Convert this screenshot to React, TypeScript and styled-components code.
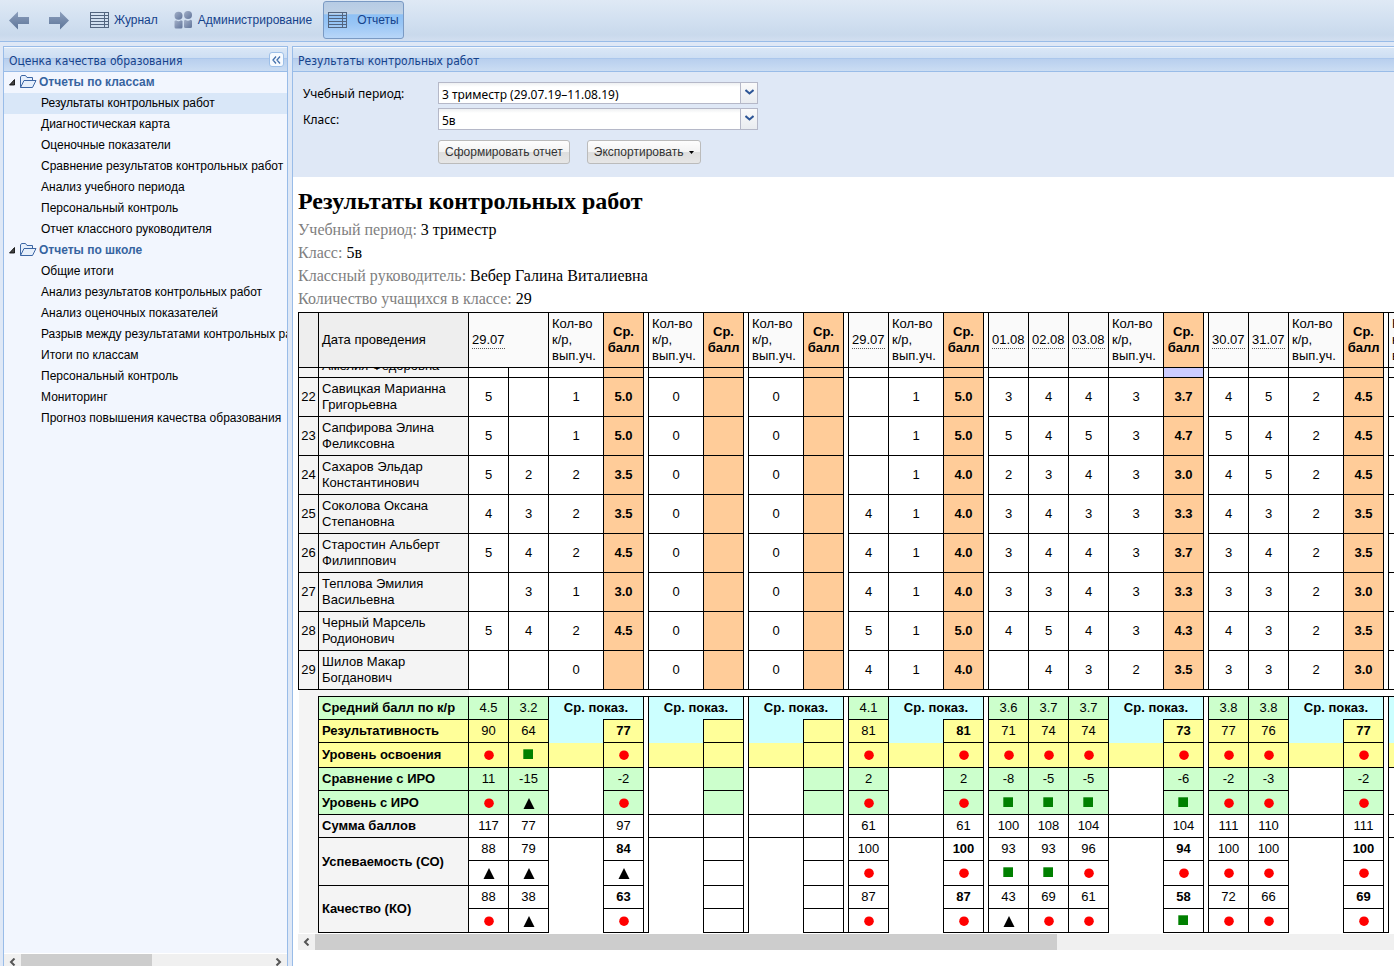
import React from "react";
import styled, { createGlobalStyle, css } from "styled-components";

const GlobalStyle = createGlobalStyle`
  * { box-sizing: border-box; }
  html, body, #root { height: 100%; }
  body {
    margin: 0;
    overflow: hidden;
    background: #dfe8f6;
    font-family: "Liberation Sans", Arial, sans-serif;
    font-size: 12px;
    color: #000;
  }
`;

const tahoma = css`
  font-family: Tahoma, "DejaVu Sans Condensed", "DejaVu Sans", sans-serif;
  font-stretch: condensed;
`;

const formFont = css`
  font-family: Tahoma, "Noto Sans", "DejaVu Sans", sans-serif;
`;

/* ---------- page frame ---------- */

const Page = styled.div`
  height: 100%;
  display: flex;
  flex-direction: column;
`;

const Toolbar = styled.nav`
  flex: none;
  height: 42px;
  display: flex;
  align-items: flex-start;
  gap: 6px;
  padding: 1px 4px;
  border-bottom: 1px solid #99bce8;
  background: linear-gradient(#dfe9f5, #d3e1f1 45%, #c9d9ec 85%, #d2dff0);
`;

const History = styled.div`
  display: flex;
  width: 75px;
`;

const ToolButton = styled.button<{ $active?: boolean; $gap: number }>`
  height: 38px;
  display: flex;
  align-items: center;
  gap: ${(p) => p.$gap}px;
  padding: 0 4px;
  border: 1px solid transparent;
  border-radius: 3px;
  background: none;
  font: 12px/16px "Liberation Sans", Arial, sans-serif;
  color: #15428b;
  ${(p) =>
    p.$active &&
    css`
      border-color: #7a9ac4;
      background: linear-gradient(#b6cbe4, #bfd2e6 34%, #8dc0f5 35%, #98c5f5 60%, #b8d6f8);
    `}
`;

const ArrowButton = styled(ToolButton)`
  flex: none;
  width: 40px;
`;

const Columns = styled.div`
  flex: 1;
  min-height: 0;
  display: flex;
  gap: 4px;
  padding: 4px 0 0 3px;
`;

const Sidebar = styled.aside`
  flex: none;
  width: 285px;
  display: flex;
  flex-direction: column;
  border: 1px solid #99bce8;
  border-bottom: 0;
  background: #f2f6fe;
`;

const Main = styled.main`
  flex: 1;
  min-width: 0;
  display: flex;
  flex-direction: column;
  border: 1px solid #99bce8;
  border-width: 1px 0 0 1px;
  background: #fff;
`;

const PanelHeader = styled.header`
  flex: none;
  height: 25px;
  display: flex;
  align-items: center;
  justify-content: space-between;
  padding: 3px 3px 0 5px;
  border-bottom: 1px solid #99bce8;
  background: linear-gradient(#f4f8fd 0 1px, #dae7f6 1px, #cddef3 11px, #abc7ec 11px 12px, #b8cfee 12px, #cbddf3);
`;

const PanelTitle = styled.h2`
  ${tahoma}
  margin: 0;
  font-size: 12px;
  line-height: 16px;
  font-weight: normal;
  color: #15428b;
`;

const CollapseButton = styled.button`
  width: 15px;
  height: 15px;
  display: flex;
  align-items: center;
  justify-content: center;
  margin-bottom: 2px;
  padding: 0;
  border: 1px solid #9dbfe8;
  border-radius: 3px;
  background: #f6faff;
`;

/* ---------- report tree ---------- */

const Tree = styled.ul`
  flex: 1;
  min-height: 0;
  margin: 0;
  padding: 0;
  list-style: none;
  overflow: hidden;
`;

const Branch = styled.ul`
  margin: 0;
  padding: 0;
  list-style: none;
`;

const Folder = styled.button`
  width: 100%;
  height: 21px;
  display: flex;
  align-items: center;
  gap: 2px;
  padding: 0 0 1px 5px;
  border: 0;
  background: none;
  font: bold 12px/16px "Liberation Sans", Arial, sans-serif;
  color: #3764a0;
`;

const Leaf = styled.a<{ $selected?: boolean }>`
  display: block;
  height: 21px;
  padding-left: 37px;
  line-height: 20px;
  white-space: nowrap;
  overflow: hidden;
  color: #000;
  text-decoration: none;
  background: ${(p) => (p.$selected ? "#d9e7f8" : "none")};
`;

/* ---------- scroll bars ---------- */

const ScrollBar = styled.div`
  flex: none;
  display: flex;
  height: 16px;
  background: #f0f0f0;
`;

const TreeScrollBar = styled(ScrollBar)`
  height: 13px;
  border-top: 1px solid #fff;
`;

const ScrollArrow = styled.button`
  flex: none;
  width: 17px;
  height: 15px;
  display: flex;
  align-items: center;
  justify-content: center;
  padding: 0;
  border: 0;
  background: none;
`;

const ScrollThumb = styled.div<{ $share: number }>`
  flex: ${(p) => p.$share};
  background: #cdcdcd;
`;

const ScrollRest = styled.div<{ $share: number }>`
  flex: ${(p) => p.$share};
`;

/* ---------- filter form ---------- */

const Filters = styled.form`
  ${formFont}
  flex: none;
  display: grid;
  grid-template-columns: 135px 320px;
  grid-template-rows: 22px 22px 30px;
  row-gap: 4px;
  padding: 10px 10px 13px;
  background: #dfe8f6;
`;

const FieldLabel = styled.label`
  font-size: 12px;
  line-height: 24px;
`;

const SelectBox = styled.div`
  position: relative;
  display: flex;
`;

const Select = styled.select`
  ${formFont}
  flex: 1;
  appearance: none;
  padding: 2px 20px 0 3px;
  border: 1px solid #b5b8c8;
  border-radius: 0;
  background: linear-gradient(#eef0f2, #fff 4px);
  font-size: 12px;
  color: #000;
`;

const Trigger = styled.span`
  position: absolute;
  top: 1px;
  right: 1px;
  bottom: 1px;
  width: 17px;
  display: flex;
  align-items: center;
  justify-content: center;
  padding-bottom: 2px;
  border-left: 1px solid #b5b8c8;
  background: linear-gradient(#fafafa, #e9ecf0);
  pointer-events: none;
`;

const FormButtons = styled.div`
  grid-column: 2;
  display: flex;
  gap: 17px;
  padding-top: 6px;
`;

const FormButton = styled.button`
  display: flex;
  align-items: center;
  gap: 6px;
  height: 24px;
  padding: 0 6px;
  border: 1px solid #bbb;
  border-radius: 3px;
  background: linear-gradient(#fdfdfd, #f3f3f3 50%, #dedede 51%, #e6e6e6);
  font: 12px/16px "Liberation Sans", Arial, sans-serif;
  color: #333;
  white-space: nowrap;
`;

/* ---------- report ---------- */

const Report = styled.section`
  flex: 1;
  min-height: 0;
  padding: 10px 0 0 5px;
  overflow: hidden;
`;

const ReportTitle = styled.h1`
  margin: 0;
  font: bold 24px/28px "Liberation Serif", "Times New Roman", serif;
`;

const Facts = styled.dl`
  margin: 3px 0 2px;
  font: 16px/23px "Liberation Serif", "Times New Roman", serif;
`;

const Fact = styled.div`
  display: flex;
  gap: 4px;
  dt { color: #808080; }
  dd { margin: 0; }
`;

const Grid = styled.table<{ $width: number }>`
  width: ${(p) => p.$width}px;
  table-layout: fixed;
  border-collapse: collapse;
  font-size: 13px;
  line-height: 16px;
`;

const Viewport = styled.div`
  overflow: hidden;
`;

const ScrolledGrid = styled(Grid)`
  margin-top: -30px;
`;

const Row = styled.tr<{ $h: number }>`
  height: ${(p) => p.$h}px;
`;

const cell = css`
  padding: 0 3px;
  border: 1px solid #000;
  font-weight: normal;
`;

const HeadCell = styled.th<{ $bg?: string }>`
  ${cell}
  text-align: left;
  background: ${(p) => p.$bg || "#fafafa"};
`;

const AverageHead = styled(HeadCell)`
  padding: 0;
  text-align: center;
  font-weight: bold;
  background: #ffcc99;
`;

const DateLink = styled.a`
  display: inline-block;
  border-bottom: 1px dotted #555;
  color: #000;
  text-decoration: none;
  white-space: nowrap;
`;

const NameCell = styled.th`
  ${cell}
  text-align: left;
  background: #f4f4f4;
`;

const NumberCell = styled(NameCell)`
  padding: 0;
  text-align: center;
`;

const LastLine = styled(NameCell)`
  padding-bottom: 3px;
  vertical-align: bottom;
`;

const ValueCell = styled.td<{ $bg?: string; $bold?: boolean }>`
  ${cell}
  padding: 0;
  text-align: center;
  font-weight: ${(p) => (p.$bold ? "bold" : "normal")};
  background: ${(p) => p.$bg || "#fff"};
`;

const GapCell = styled.td<{ $top?: boolean; $bottom?: boolean }>`
  padding: 0;
  border: 0 solid #000;
  border-left-width: 1px;
  border-right-width: 1px;
  ${(p) => p.$top && "border-top-width: 1px;"}
  ${(p) => p.$bottom && "border-bottom-width: 1px;"}
`;

const OpenCell = styled.td<{ $bg?: string; $bottom?: boolean }>`
  padding: 0;
  border: 0 solid #000;
  ${(p) => p.$bottom && "border-bottom-width: 1px;"}
  background: ${(p) => p.$bg || "#fff"};
`;

const SummaryTitle = styled.td`
  padding: 0;
  border: 0 solid #000;
  border-top-width: 1px;
  text-align: center;
  font-weight: bold;
  background: #ccffff;
`;

const MarginCell = styled.td`
  padding: 0;
  background: #f4f4f4;
`;

const SummaryLabel = styled(NameCell)<{ $bg?: string }>`
  font-weight: bold;
  background: ${(p) => p.$bg || "#f4f4f4"};
`;

const TableScrollBar = styled(ScrollBar)`
  margin-top: 1px;
`;

/* ---------- drawings ---------- */

const MarkSvg = styled.svg`
  display: block;
  margin: 0 auto;
`;

function Mark({ kind }: { kind: string }) {
  return (
    <MarkSvg width="14" height="14" viewBox="0 0 14 14">
      {kind === "c" && <circle cx="7" cy="7.2" r="4.8" fill="#f00" />}
      {kind === "s" && <rect x="1.300" y="1.300" width="9.700" height="9.700" fill="#008000" />}
      {kind === "t" && <path d="M7 2 L12.500 13 H1.500 Z" fill="#000" />}
    </MarkSvg>
  );
}

function Arrow({ right }: { right?: boolean }) {
  return (
    <svg width="20" height="19" viewBox="0 0 20 19">
      <defs>
        <linearGradient id="arrowFill" x1="0" y1="0" x2="0" y2="1">
          <stop offset="0" stopColor="#8d9fbd" />
          <stop offset="1" stopColor="#5d7598" />
        </linearGradient>
      </defs>
      <path
        d={right ? "M20 9.5 L11 0.5 V6 H0 V13 H11 V18.5 Z" : "M0 9.5 L9 0.5 V6 H20 V13 H9 V18.5 Z"}
        fill="url(#arrowFill)"
      />
    </svg>
  );
}

function SheetIcon() {
  return (
    <svg width="19" height="16" viewBox="0 0 19 16" fill="none" stroke="#53657f">
      <rect x="0.5" y="0.5" width="18" height="15" />
      <path d="M0 3.5H19 M0 6.5H19 M0 9.5H19 M0 12.5H19 M14.5 0V16" />
    </svg>
  );
}

function PeopleIcon() {
  return (
    <svg width="19" height="18" viewBox="0 0 19 18">
      <defs>
        <linearGradient id="peopleFill" x1="0" y1="0" x2="1" y2="1">
          <stop offset="0" stopColor="#a3b0c8" />
          <stop offset="1" stopColor="#60749a" />
        </linearGradient>
      </defs>
      <g fill="url(#peopleFill)">
        <circle cx="4.5" cy="4.7" r="4" />
        <circle cx="14" cy="4" r="4" />
        <path d="M0.5 10 L2 9.300 Q4.500 11 7 9.300 L8.500 10 V16 Q8.500 17.500 7 17.500 H2 Q0.500 17.500 0.500 16 Z" />
        <path d="M10 9.500 L11.500 8.800 Q14 10.500 16.500 8.800 L18 9.500 V15.500 Q18 17 16.500 17 H11.500 Q10 17 10 15.500 Z" />
      </g>
    </svg>
  );
}

function FolderIcon() {
  return (
    <svg width="17" height="14" viewBox="0 0 17 14" fill="#e6effb" stroke="#3c66a4" strokeLinejoin="round">
      <path d="M0.500 12.500 V2 L1.500 0.500 H5.500 L7 2.500 H12.500 V5.500" />
      <path d="M0.500 12.500 L4 5.500 H16 L12.500 12.500 Z" />
    </svg>
  );
}

function ExpandedIcon() {
  return (
    <svg width="9" height="8" viewBox="0 0 9 8">
      <path d="M5.500 1.500 V7 H0.500 Z" fill="#444" stroke="#000" strokeWidth="0.8" />
    </svg>
  );
}

function Chevron({ right }: { right?: boolean }) {
  return (
    <svg width="7" height="8" viewBox="0 0 7 8" fill="none" stroke="#555" strokeWidth="2">
      <path d={right ? "M1.500 0.500 L5 4 L1.500 7.500" : "M5.500 0.500 L2 4 L5.500 7.500"} />
    </svg>
  );
}

function DropIcon() {
  return (
    <svg width="9" height="6" viewBox="0 0 9 6" fill="none" stroke="#2d5596" strokeWidth="2">
      <path d="M0.500 1 L4.500 4.500 L8.500 1" />
    </svg>
  );
}

/* ---------- data ---------- */

const tree = [
  {
    title: "Отчеты по классам",
    items: [
      "Результаты контрольных работ",
      "Диагностическая карта",
      "Оценочные показатели",
      "Сравнение результатов контрольных работ",
      "Анализ учебного периода",
      "Персональный контроль",
      "Отчет классного руководителя",
    ],
  },
  {
    title: "Отчеты по школе",
    items: [
      "Общие итоги",
      "Анализ результатов контрольных работ",
      "Анализ оценочных показателей",
      "Разрыв между результатами контрольных работ",
      "Итоги по классам",
      "Персональный контроль",
      "Мониторинг",
      "Прогноз повышения качества образования",
    ],
  },
];

type Group = { marks: number; dates: string[] };

const groups: Group[] = [
  { marks: 2, dates: ["29.07"] },
  { marks: 0, dates: [] },
  { marks: 0, dates: [] },
  { marks: 1, dates: ["29.07"] },
  { marks: 3, dates: ["01.08", "02.08", "03.08"] },
  { marks: 2, dates: ["30.07", "31.07"] },
  { marks: 0, dates: [] },
];

const widths = [20, 150];
groups.forEach((g, i) => {
  if (i) widths.push(5);
  for (let m = 0; m < g.marks; m++) widths.push(40);
  widths.push(55, 40);
});
const tableWidth = widths.reduce((a, b) => a + b, 1);

// Each student: marks of a group, then the count and the average, groups split by "|".
const students: [number, string, string, string][] = [
  [22, "Савицкая Марианна", "Григорьевна", "5,,1,5.0|0,|0,|,1,5.0|3,4,4,3,3.7|4,5,2,4.5|,"],
  [23, "Сапфирова Элина", "Феликсовна", "5,,1,5.0|0,|0,|,1,5.0|5,4,5,3,4.7|5,4,2,4.5|,"],
  [24, "Сахаров Эльдар", "Константинович", "5,2,2,3.5|0,|0,|,1,4.0|2,3,4,3,3.0|4,5,2,4.5|,"],
  [25, "Соколова Оксана", "Степановна", "4,3,2,3.5|0,|0,|4,1,4.0|3,4,3,3,3.3|4,3,2,3.5|,"],
  [26, "Старостин Альберт", "Филиппович", "5,4,2,4.5|0,|0,|4,1,4.0|3,4,4,3,3.7|3,4,2,3.5|,"],
  [27, "Теплова Эмилия", "Васильевна", ",3,1,3.0|0,|0,|4,1,4.0|3,3,4,3,3.3|3,3,2,3.0|,"],
  [28, "Черный Марсель", "Родионович", "5,4,2,4.5|0,|0,|5,1,5.0|4,5,4,3,4.3|4,3,2,3.5|,"],
  [29, "Шилов Макар", "Богданович", ",,0,|0,|0,|4,1,4.0|,4,3,2,3.5|3,3,2,3.0|,"],
];

const GREEN = "#ccffcc";
const YELLOW = "#ffff99";
const CYAN = "#ccffff";
const PEACH = "#ffcc99";

type Summary = {
  label?: string;
  span?: number;
  h: number;
  bg?: string;
  labelBg?: string;
  blank: "title" | "open" | "line" | "closed";
  blankBg?: string;
  bold?: boolean;
  values: string;
};

// Values of the date columns followed by the average; c, s and t stand for marks.
const summary: Summary[] = [
  { label: "Средний балл по к/р", h: 23, bg: GREEN, labelBg: GREEN, blank: "title", values: "4.5,3.2|||4.1|3.6,3.7,3.7|3.8,3.8|" },
  { label: "Результативность", h: 23, bg: YELLOW, labelBg: YELLOW, blank: "open", blankBg: CYAN, bold: true, values: "90,64,77|||81,81|71,74,74,73|77,76,77|" },
  { label: "Уровень освоения", h: 25, bg: YELLOW, labelBg: YELLOW, blank: "line", blankBg: YELLOW, values: "c,s,c|||c,c|c,c,c,c|c,c,c|" },
  { label: "Сравнение с ИРО", h: 23, bg: GREEN, labelBg: GREEN, blank: "open", values: "11,-15,-2|||2,2|-8,-5,-5,-6|-2,-3,-2|" },
  { label: "Уровень с ИРО", h: 24, bg: GREEN, labelBg: GREEN, blank: "line", values: "c,t,c|||c,c|s,s,s,s|c,c,c|" },
  { label: "Сумма баллов", h: 23, blank: "closed", values: "117,77,97|||61,61|100,108,104,104|111,110,111|" },
  { label: "Успеваемость (СО)", span: 2, h: 23, blank: "open", bold: true, values: "88,79,84|||100,100|93,93,96,94|100,100,100|" },
  { h: 25, blank: "open", values: "t,t,t|||c,c|s,s,c,c|c,c,c|" },
  { label: "Качество (КО)", span: 2, h: 23, blank: "open", bold: true, values: "88,38,63|||87,87|43,69,61,58|72,66,69|" },
  { h: 24, blank: "open", values: "c,t,c|||c,c|t,c,c,s|c,c,c|" },
];

/* ---------- table parts ---------- */

function Cols() {
  return (
    <colgroup>
      {widths.map((w, i) => (
        <col key={i} width={w} />
      ))}
    </colgroup>
  );
}

function TableHead() {
  return (
    <Grid $width={tableWidth}>
      <Cols />
      <thead>
        <Row $h={55}>
          <HeadCell $bg="#eeeeee" />
          <HeadCell $bg="#eeeeee">Дата проведения</HeadCell>
          {groups.map((g, gi) => (
            <React.Fragment key={gi}>
              {gi > 0 && <GapCell $top $bottom />}
              {g.dates.map((d) => (
                <HeadCell key={d} colSpan={g.marks / g.dates.length}>
                  <DateLink href="#">{d}</DateLink>
                </HeadCell>
              ))}
              <HeadCell>Кол-во к/р, вып.уч.</HeadCell>
              <AverageHead>Ср. балл</AverageHead>
            </React.Fragment>
          ))}
        </Row>
      </thead>
    </Grid>
  );
}

function ClippedRow() {
  return (
    <Row $h={39}>
      <NumberCell />
      <LastLine>Амелия Федоровна</LastLine>
      {groups.map((g, gi) => (
        <React.Fragment key={gi}>
          {gi > 0 && <GapCell />}
          {Array.from({ length: g.marks + 1 }, (_, i) => (
            <ValueCell key={i} />
          ))}
          <ValueCell $bg={gi === 4 ? "#ccccff" : PEACH} />
        </React.Fragment>
      ))}
    </Row>
  );
}

function StudentRow({ row, last }: { row: [number, string, string, string]; last: boolean }) {
  const [num, first, second, data] = row;
  return (
    <Row $h={39}>
      <NumberCell>{num}</NumberCell>
      <NameCell>
        {first}
        <br />
        {second}
      </NameCell>
      {data.split("|").map((part, gi) => {
        const values = part.split(",");
        return (
          <React.Fragment key={gi}>
            {gi > 0 && <GapCell $bottom={last} />}
            {values.map((v, i) => {
              const avg = i === values.length - 1;
              return (
                <ValueCell key={i} $bold={avg} $bg={avg ? PEACH : undefined}>
                  {v}
                </ValueCell>
              );
            })}
          </React.Fragment>
        );
      })}
    </Row>
  );
}

function SummaryValue({ value, bg, bold }: { value: string; bg?: string; bold?: boolean }) {
  return (
    <ValueCell $bg={bg} $bold={bold}>
      {/^[cst]$/.test(value) ? <Mark kind={value} /> : value}
    </ValueCell>
  );
}

function SummaryRow({ row, index }: { row: Summary; index: number }) {
  const parts = row.values.split("|");
  return (
    <Row $h={row.h}>
      {index === 0 && <MarginCell rowSpan={summary.length} />}
      {row.label && (
        <SummaryLabel $bg={row.labelBg} rowSpan={row.span}>
          {row.label}
        </SummaryLabel>
      )}
      {groups.map((g, gi) => {
        const values = parts[gi].split(",");
        return (
          <React.Fragment key={gi}>
            {gi > 0 && <GapCell $top={index === 0} $bottom={index === summary.length - 1} />}
            {Array.from({ length: g.marks }, (_, i) => (
              <SummaryValue key={i} value={values[i]} bg={row.bg} />
            ))}
            {row.blank === "title" ? (
              <SummaryTitle colSpan={2}>Ср. показ.</SummaryTitle>
            ) : (
              <>
                {row.blank === "closed" ? (
                  <ValueCell />
                ) : (
                  <OpenCell $bg={row.blankBg} $bottom={row.blank === "line"} />
                )}
                <SummaryValue value={values[g.marks] || ""} bg={row.bg} bold={row.bold} />
              </>
            )}
          </React.Fragment>
        );
      })}
    </Row>
  );
}

/* ---------- page ---------- */

export default function App() {
  return (
    <Page>
      <GlobalStyle />
      <Toolbar>
        <History>
          <ArrowButton $gap={0} aria-label="Назад">
            <Arrow />
          </ArrowButton>
          <ArrowButton $gap={0} aria-label="Вперед">
            <Arrow right />
          </ArrowButton>
        </History>
        <ToolButton $gap={5}>
          <SheetIcon />
          Журнал
        </ToolButton>
        <ToolButton $gap={5}>
          <PeopleIcon />
          Администрирование
        </ToolButton>
        <ToolButton $gap={10} $active>
          <SheetIcon />
          Отчеты
        </ToolButton>
      </Toolbar>
      <Columns>
        <Sidebar>
          <PanelHeader>
            <PanelTitle>Оценка качества образования</PanelTitle>
            <CollapseButton aria-label="Свернуть">
              <svg width="9" height="8" viewBox="0 0 9 8" fill="none" stroke="#4571ac" strokeWidth="1.3">
                <path d="M4 0.500 L1 4 L4 7.500 M8 0.500 L5 4 L8 7.500" />
              </svg>
            </CollapseButton>
          </PanelHeader>
          <Tree>
            {tree.map((branch, bi) => (
              <li key={branch.title}>
                <Folder>
                  <ExpandedIcon />
                  <FolderIcon />
                  {branch.title}
                </Folder>
                <Branch>
                  {branch.items.map((item, i) => (
                    <li key={item}>
                      <Leaf href="#" $selected={bi === 0 && i === 0}>
                        {item}
                      </Leaf>
                    </li>
                  ))}
                </Branch>
              </li>
            ))}
          </Tree>
          <TreeScrollBar>
            <ScrollArrow aria-label="Влево">
              <Chevron />
            </ScrollArrow>
            <ScrollThumb $share={131} />
            <ScrollRest $share={118} />
            <ScrollArrow aria-label="Вправо">
              <Chevron right />
            </ScrollArrow>
          </TreeScrollBar>
        </Sidebar>
        <Main>
          <PanelHeader>
            <PanelTitle>Результаты контрольных работ</PanelTitle>
          </PanelHeader>
          <Filters>
            <FieldLabel htmlFor="period">Учебный период:</FieldLabel>
            <SelectBox>
              <Select id="period">
                <option>3 триместр (29.07.19–11.08.19)</option>
              </Select>
              <Trigger>
                <DropIcon />
              </Trigger>
            </SelectBox>
            <FieldLabel htmlFor="class">Класс:</FieldLabel>
            <SelectBox>
              <Select id="class">
                <option>5в</option>
              </Select>
              <Trigger>
                <DropIcon />
              </Trigger>
            </SelectBox>
            <FormButtons>
              <FormButton type="button">Сформировать отчет</FormButton>
              <FormButton type="button">
                Экспортировать
                <svg width="5" height="3" viewBox="0 0 5 3">
                  <path d="M0 0 H5 L2.500 3 Z" fill="#000" />
                </svg>
              </FormButton>
            </FormButtons>
          </Filters>
          <Report>
            <ReportTitle>Результаты контрольных работ</ReportTitle>
            <Facts>
              <Fact>
                <dt>Учебный период:</dt>
                <dd>3 триместр</dd>
              </Fact>
              <Fact>
                <dt>Класс:</dt>
                <dd>5в</dd>
              </Fact>
              <Fact>
                <dt>Классный руководитель:</dt>
                <dd>Вебер Галина Виталиевна</dd>
              </Fact>
              <Fact>
                <dt>Количество учащихся в классе:</dt>
                <dd>29</dd>
              </Fact>
            </Facts>
            <TableHead />
            <Viewport>
              <ScrolledGrid $width={tableWidth}>
                <Cols />
                <tbody>
                  <ClippedRow />
                  {students.map((row, i) => (
                    <StudentRow key={row[0]} row={row} last={i === students.length - 1} />
                  ))}
                  <Row $h={7}>
                    <MarginCell colSpan={2} />
                    <td colSpan={widths.length - 2} />
                  </Row>
                  {summary.map((row, i) => (
                    <SummaryRow key={i} row={row} index={i} />
                  ))}
                </tbody>
              </ScrolledGrid>
            </Viewport>
            <TableScrollBar>
              <ScrollArrow aria-label="Влево">
                <Chevron />
              </ScrollArrow>
              <ScrollThumb $share={742} />
              <ScrollRest $share={337} />
            </TableScrollBar>
          </Report>
        </Main>
      </Columns>
    </Page>
  );
}
